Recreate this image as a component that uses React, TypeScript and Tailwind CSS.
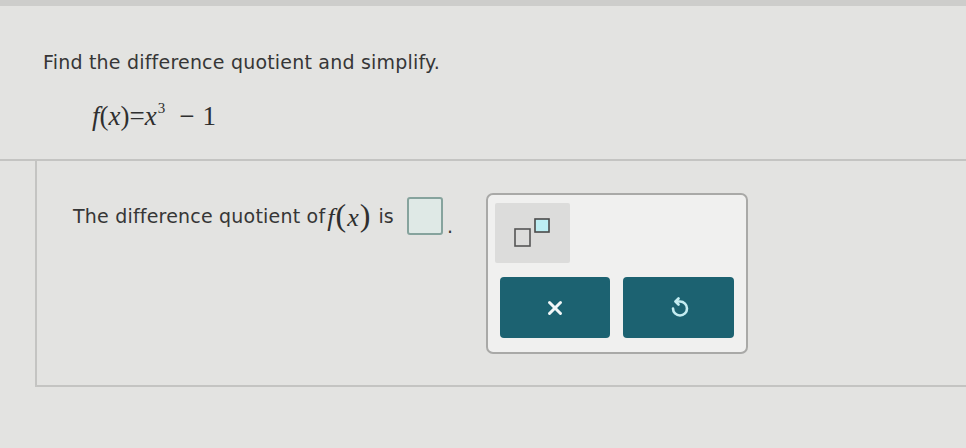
import { X } from 'lucide-react';

function SuperscriptIcon() {
  return (
    <svg width="40" height="32" viewBox="0 0 40 32" fill="none">
      <rect x="1" y="12" width="15" height="17" stroke="#555" strokeWidth="1.6" />
      <rect x="21" y="2" width="14" height="13" fill="#bdeef3" stroke="#4a4a4a" strokeWidth="1.6" />
    </svg>
  );
}

function UndoIcon() {
  return (
    <svg width="20" height="22" viewBox="0 0 20 22" fill="none" stroke="#c4ecf1" strokeWidth="2.6" strokeLinecap="round" strokeLinejoin="round">
      <path d="M7 4.5 L11 4.5 A7 7 0 1 1 4 11.5" />
      <path d="M9.5 1.5 L6.5 4.5 L9.5 7.5" />
    </svg>
  );
}

export default function App() {
  return (
    <div className="w-[966px] h-[448px] overflow-hidden bg-[#e3e3e1] font-['DejaVu_Sans',_sans-serif] text-[#363636]">
      <div className="h-[6px] bg-[#cdcdcb]" />

      <div className="h-[153px] pt-[43px]">
        <p className="pl-[43px] text-[19px] leading-[26px] tracking-[0.2px]">Find the difference quotient and simplify.</p>
        <p className="pl-[92px] mt-[26px] font-['Liberation_Serif',_serif] text-[27px] leading-[30px] text-[#2f2f2f]">
          <i>f</i>(<i>x</i>)=<i>x</i>
          <sup className="text-[15px] relative -top-[12px] ml-[1px]">3</sup>
          <span className="ml-[14px]">−</span>
          <span className="ml-[8px]">1</span>
        </p>
      </div>

      <div className="h-[2px] bg-[#c4c4c2]" />

      <div className="ml-[35px] h-[226px] border-l-2 border-b-2 border-[#c4c4c2] flex items-start">
        <div className="pl-[36px] pt-[36px] w-[449px] flex items-center text-[19px] leading-[26px] tracking-[0.2px]">
          <span>The difference quotient of</span>
          <span className="ml-[2px] font-['Liberation_Serif',_serif] text-[26px] text-[#2f2f2f] tracking-normal">
            <i>f</i>
            <span className="text-[32px] ml-[1px]">(</span>
            <i className="mx-[1px]">x</i>
            <span className="text-[32px]">)</span>
          </span>
          <span className="ml-[8px]">is</span>
          <span className="ml-[13px] w-[36px] h-[38px] border-2 border-[#86a39d] rounded-[3px] bg-[#dfe9e6]" />
          <span className="ml-[4px] self-end -mb-[4px]">.</span>
        </div>

        <div className="mt-[32px] w-[262px] h-[161px] rounded-[7px] border-2 border-[#a9a9a7] bg-[#f0f0ef] pt-[8px] pl-[7px] pr-[12px]">
          <div className="w-[75px] h-[60px] bg-[#dcdcdb] rounded-[2px] flex items-center justify-center pl-[2px]">
            <SuperscriptIcon />
          </div>
          <div className="mt-[14px] ml-[5px] flex gap-[13px]">
            <button className="w-[110px] h-[61px] rounded-[4px] bg-[#1c6271] flex items-center justify-center">
              <X size={22} strokeWidth={3.2} color="#f2f7f8" />
            </button>
            <button className="w-[111px] h-[61px] rounded-[4px] bg-[#1c6271] flex items-center justify-center">
              <UndoIcon />
            </button>
          </div>
        </div>
      </div>
    </div>
  );
}
